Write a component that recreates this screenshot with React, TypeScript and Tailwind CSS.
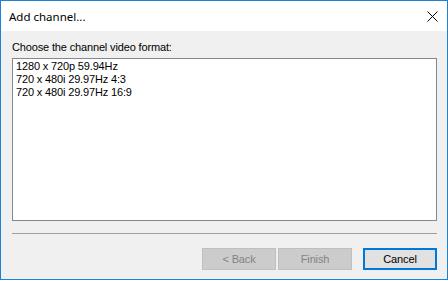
import React from "react";

const formats = [
  "1280 x 720p 59.94Hz",
  "720 x 480i 29.97Hz 4:3",
  "720 x 480i 29.97Hz 16:9",
];

export default function App() {
  return (
    <div
      className="w-[448px] h-[281px] bg-white text-[11px] text-black"
      style={{ fontFamily: '"Liberation Sans", Arial, sans-serif' }}
    >
      <div className="h-[280px] border border-[#1883d7] flex flex-col">
        {/* Title bar */}
        <div className="h-[30px] bg-white flex items-center justify-between pl-[8px] pr-[9px]">
          <span
            className="text-[11.5px] leading-[15px]"
            style={{ fontFamily: '"Noto Sans", "Open Sans", sans-serif' }}
          >
            Add channel...
          </span>
          <svg width="11" height="11" viewBox="0 0 11 11" className="mt-[1px]">
            <path d="M0.5 0.5 L10.5 10.5 M10.5 0.5 L0.5 10.5" stroke="#000" strokeWidth="1" />
          </svg>
        </div>

        {/* Body */}
        <div className="flex-1 bg-[#f0f0f0] pl-[11px] pr-[10px] flex flex-col tracking-[-0.15px]">
          <div className="pt-[9px] leading-[15px]">Choose the channel video format:</div>

          <div className="mt-[3px] h-[163px] bg-white border border-[#828790] pl-[3px] pt-[1px]">
            {formats.map((f) => (
              <div key={f} className="leading-[13px]">
                {f}
              </div>
            ))}
          </div>

          <div className="mt-[12px] h-px bg-[#a0a0a0]" />

          <div className="mt-[14px] flex justify-end">
            <button
              disabled
              className="w-[74px] h-[22px] bg-[#cccccc] border border-[#bfbfbf] text-[#838383] leading-[18px]"
            >
              &lt; Back
            </button>
            <button
              disabled
              className="ml-[2px] w-[74px] h-[22px] bg-[#cccccc] border border-[#bfbfbf] text-[#838383] leading-[18px]"
            >
              Finish
            </button>
            <button className="ml-[11px] w-[74px] h-[22px] bg-[#e1e1e1] border-2 border-[#0078d7] text-black leading-[16px]">
              Cancel
            </button>
          </div>
        </div>
      </div>
    </div>
  );
}
